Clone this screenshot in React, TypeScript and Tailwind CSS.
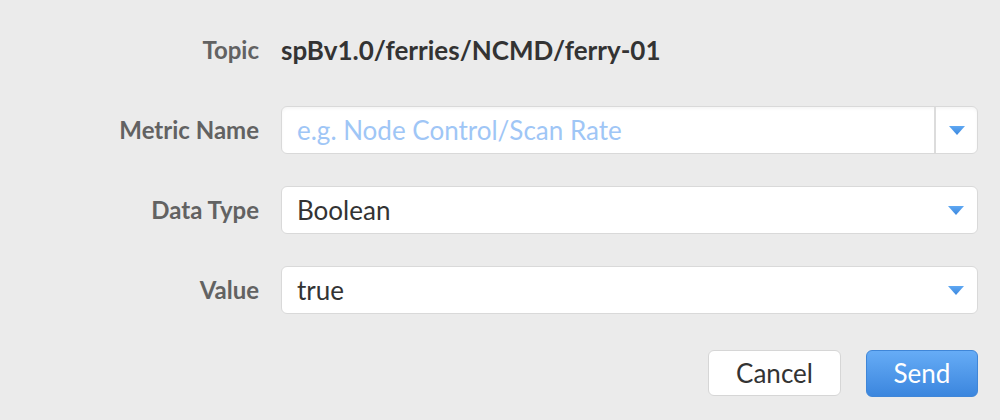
import React from "react";

function Caret() {
  return (
    <svg width="16" height="9" viewBox="0 0 16 9" className="block">
      <defs>
        <linearGradient id="cg" x1="0" y1="0" x2="0" y2="1">
          <stop offset="0" stopColor="#5fa8f3" />
          <stop offset="1" stopColor="#3b87de" />
        </linearGradient>
      </defs>
      <path d="M0 0 H16 L8 9 Z" fill="url(#cg)" />
    </svg>
  );
}

function Row({ label, children }: { label: string; children: React.ReactNode }) {
  return (
    <div className="flex items-center h-[48px]">
      <div className="w-[259px] shrink-0 text-right text-[24px] font-bold text-[#626262] leading-none">{label}</div>
      <div className="ml-[22px] flex-1">{children}</div>
    </div>
  );
}

export default function App() {
  return (
    <div
      className="w-[1000px] h-[420px] bg-[#ebebeb] pt-[26px] pr-[22px] flex flex-col gap-[32px]"
      style={{ fontFamily: "Lato, 'Open Sans', sans-serif" }}
    >
      <Row label="Topic">
        <div className="text-[26px] font-bold text-[#333333] leading-none">spBv1.0/ferries/NCMD/ferry-01</div>
      </Row>
      <Row label="Metric Name">
        <div className="flex h-[48px] bg-white border border-[#d9d9d9] rounded-[6px] shadow-[inset_0_2px_3px_rgba(0,0,0,0.04)]">
          <div className="flex-1 flex items-center pl-[15px] text-[26px] text-[#9fc6f6]">e.g. Node Control/Scan Rate</div>
          <div className="w-[43px] border-l-2 border-[#dcdcdc] flex items-center justify-center">
            <Caret />
          </div>
        </div>
      </Row>
      <Row label="Data Type">
        <div className="flex h-[48px] bg-white border border-[#d9d9d9] rounded-[6px] items-center pl-[15px] pr-[13px]">
          <div className="flex-1 text-[26px] text-[#333333]">Boolean</div>
          <Caret />
        </div>
      </Row>
      <Row label="Value">
        <div className="flex h-[48px] bg-white border border-[#d9d9d9] rounded-[6px] items-center pl-[15px] pr-[13px]">
          <div className="flex-1 text-[26px] text-[#333333]">true</div>
          <Caret />
        </div>
      </Row>
      <div className="flex justify-end gap-[25px] mt-[4px]">
        <button className="w-[133px] h-[46px] bg-white border border-[#d6d6d6] rounded-[6px] text-[26px] text-[#333333]">
          Cancel
        </button>
        <button className="w-[112px] h-[47px] rounded-[6px] border border-[#3f86d8] bg-gradient-to-b from-[#66acf6] to-[#3b86de] text-[26px] text-white">
          Send
        </button>
      </div>
    </div>
  );
}
